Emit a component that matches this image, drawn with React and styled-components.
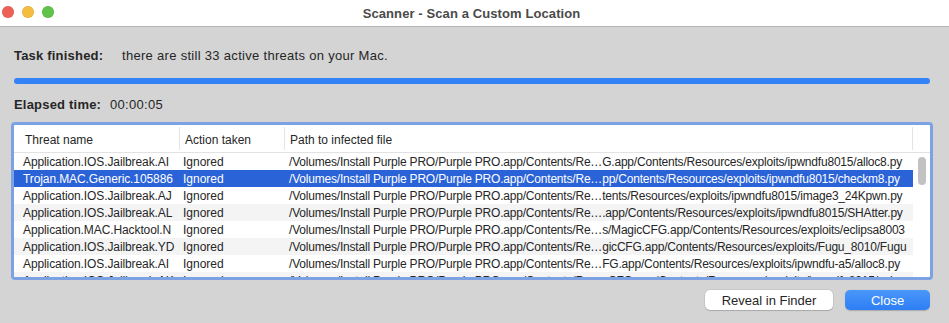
import React from 'react'
import styled, { createGlobalStyle } from 'styled-components';

const GlobalStyle = createGlobalStyle`
    html, body{
        margin:0;
        padding:0;
        background:#d4d4d4;
    }
    body{
        font-family:"Liberation Sans", Arial, sans-serif;
        -webkit-font-smoothing:antialiased;
    }
`;

// Styles
const Window = styled.div`
    width:949px;
    height:323px;
    display:flex;
    flex-direction:column;
    background:#d4d4d4;
    overflow:hidden;
`;

const TitleBar = styled.header`
    height:26px;
    flex:none;
    display:flex;
    align-items:center;
    position:relative;
    background:#ffffff;
    border-bottom:1px solid #b3b3b3;

    h1{
        flex:1;
        margin:0;
        text-align:center;
        font-size:13px;
        font-weight:700;
        color:#4a4a4a;
        padding-right:6px;
        letter-spacing:0.1px;
    }
`;

const Lights = styled.div`
    position:absolute;
    left:2px;
    top:6px;
    display:flex;
    gap:8px;
`;

const Light = styled.span`
    width:12px;
    height:12px;
    border-radius:50%;
    background:${p => p.color};
    box-shadow:inset 0 0 0 0.5px rgba(0,0,0,0.12);
`;

const Content = styled.main`
    flex:1;
    display:flex;
    flex-direction:column;
    padding:0 19px 0 14px;
`;

const InfoRow = styled.div`
    display:flex;
    align-items:center;
    height:16px;
    margin-top:${p => p.top}px;
    font-size:13px;
    letter-spacing:0.3px;
    color:#262626;

    b{
        font-weight:700;
        letter-spacing:0.2px;
        width:${p => p.label}px;
        flex:none;
    }
`;

const Progress = styled.div`
    height:6px;
    margin-top:15px;
    border-radius:3px;
    background:#3383f6;
`;

const TableFrame = styled.section`
    margin:10px -3px 0;
    height:158px;
    box-sizing:border-box;
    border:3px solid #7da2e4;
    border-radius:4px;
    background:#ffffff;
    display:flex;
    flex-direction:column;
    overflow:hidden;
`;

const HeaderRow = styled.div`
    display:grid;
    grid-template-columns:166px 105px 1fr 17px;
    height:27px;
    flex:none;
    border-bottom:1px solid #e2e2e2;
    font-size:12px;
    color:#262626;
`;

const HeaderCell = styled.div`
    display:flex;
    align-items:center;
    padding-left:${p => p.pad}px;
    padding-top:3px;
    border-right:${p => p.divider ? '1px solid #e4e4e4' : 'none'};
    margin:2px 0;
`;

const Body = styled.div`
    flex:1;
    display:flex;
    min-height:0;
`;

const Rows = styled.div`
    flex:1;
    min-width:0;
`;

const Row = styled.div`
    display:grid;
    grid-template-columns:166px 105px 1fr;
    height:17px;
    font-size:12px;
    color:${p => p.selected ? '#ffffff' : '#262626'};
    background:${p => p.selected ? '#2a62d8' : p.stripe ? '#f4f4f5' : '#ffffff'};
`;

const Cell = styled.div`
    display:flex;
    align-items:center;
    padding-left:${p => p.pad}px;
    padding-top:1px;
    letter-spacing:${p => p.tight || 0}px;
    white-space:nowrap;
    overflow:hidden;
`;

const ScrollTrack = styled.div`
    width:17px;
    flex:none;
    display:flex;
    justify-content:center;
    padding-top:4px;
`;

const Thumb = styled.div`
    width:8px;
    height:28px;
    border-radius:4px;
    background:#c2c2c2;
`;

const Actions = styled.footer`
    display:flex;
    justify-content:flex-end;
    gap:12px;
    margin-top:10px;
`;

const Button = styled.button`
    height:20px;
    width:${p => p.w}px;
    border:none;
    border-radius:5px;
    font-family:inherit;
    font-size:13px;
    padding:0;
    color:${p => p.primary ? '#ffffff' : '#262626'};
    background:${p => p.primary ? 'linear-gradient(#4a97f9, #2d7ef5)' : '#ffffff'};
    box-shadow:${p => p.primary ? '0 0.5px 1px rgba(0,0,0,0.2)' : '0 0 0 0.5px rgba(0,0,0,0.12), 0 1px 1px rgba(0,0,0,0.15)'};
`;

const base = '/Volumes/Install Purple PRO/Purple PRO.app/Contents/Re…';

const threats = [
    ['Application.IOS.Jailbreak.AI', 'G.app/Contents/Resources/exploits/ipwndfu8015/alloc8.py'],
    ['Trojan.MAC.Generic.105886', 'pp/Contents/Resources/exploits/ipwndfu8015/checkm8.py'],
    ['Application.IOS.Jailbreak.AJ', 'tents/Resources/exploits/ipwndfu8015/image3_24Kpwn.py'],
    ['Application.IOS.Jailbreak.AL', '.app/Contents/Resources/exploits/ipwndfu8015/SHAtter.py'],
    ['Application.MAC.Hacktool.N', 's/MagicCFG.app/Contents/Resources/exploits/eclipsa8003'],
    ['Application.IOS.Jailbreak.YD', 'gicCFG.app/Contents/Resources/exploits/Fugu_8010/Fugu'],
    ['Application.IOS.Jailbreak.AI', 'FG.app/Contents/Resources/exploits/ipwndfu-a5/alloc8.py'],
    ['Application.IOS.Jailbreak.AK', 'cCFG.app/Contents/Resources/exploits/ipwndfu8015/usb.py'],
];

const App = () => {
    return (
        <Window>
            <GlobalStyle/>
            <TitleBar>
                <Lights>
                    <Light color='#ee5f57'/>
                    <Light color='#f5bd3f'/>
                    <Light color='#5fc24a'/>
                </Lights>
                <h1>Scanner - Scan a Custom Location</h1>
            </TitleBar>
            <Content>
                <InfoRow top={20} label={108}>
                    <b>Task finished:</b>
                    <span>there are still 33 active threats on your Mac.</span>
                </InfoRow>
                <Progress/>
                <InfoRow top={12} label={96}>
                    <b>Elapsed time:</b>
                    <span>00:00:05</span>
                </InfoRow>
                <TableFrame>
                    <HeaderRow>
                        <HeaderCell pad={11} divider>Threat name</HeaderCell>
                        <HeaderCell pad={5} divider>Action taken</HeaderCell>
                        <HeaderCell pad={5} divider>Path to infected file</HeaderCell>
                        <HeaderCell/>
                    </HeaderRow>
                    <Body>
                        <Rows>
                            {threats.map(([name, tail], i) => (
                                <Row key={i} selected={i === 1} stripe={i % 2 === 1}>
                                    <Cell pad={9} tight={-0.1}>{name}</Cell>
                                    <Cell pad={3}>Ignored</Cell>
                                    <Cell pad={4} tight={-0.2}>{base + tail}</Cell>
                                </Row>
                            ))}
                        </Rows>
                        <ScrollTrack>
                            <Thumb/>
                        </ScrollTrack>
                    </Body>
                </TableFrame>
                <Actions>
                    <Button w={128}>Reveal in Finder</Button>
                    <Button w={85} primary>Close</Button>
                </Actions>
            </Content>
        </Window>
    )
}

export default App
